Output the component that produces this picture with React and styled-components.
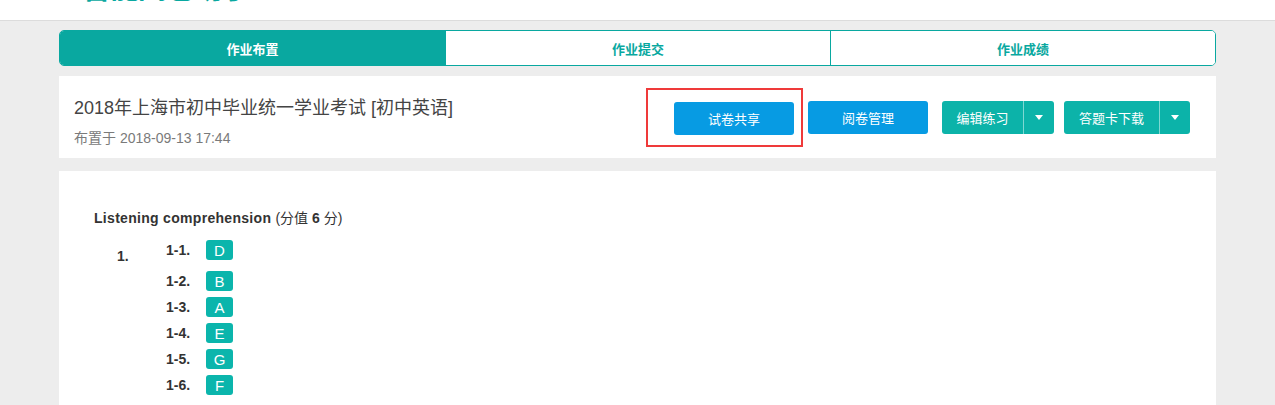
import React from "react";
import styled, { createGlobalStyle } from "styled-components";

const GlobalStyle = createGlobalStyle`
  html, body {
    margin: 0;
    padding: 0;
    background: #ededed;
    font-family: "Liberation Sans", "Noto Sans CJK SC", sans-serif;
    color: #333;
  }
`;

const tabs = ["作业布置", "作业提交", "作业成绩"];

const answers = [
  { no: "1-1.", key: "D" },
  { no: "1-2.", key: "B" },
  { no: "1-3.", key: "A" },
  { no: "1-4.", key: "E" },
  { no: "1-5.", key: "G" },
  { no: "1-6.", key: "F" },
];

function Caret() {
  return (
    <svg width="8" height="5" viewBox="0 0 8 5">
      <path d="M0 0 L8 0 L4 5 Z" fill="#fff" />
    </svg>
  );
}

function App() {
  return (
    <>
      <GlobalStyle />
      <Header>
        <Brand>智能阅卷助手</Brand>
      </Header>
      <Main>
        <Tabs>
          {tabs.map((t, i) => (
            <Tab key={t} active={i === 0}>
              {t}
            </Tab>
          ))}
        </Tabs>

        <InfoCard>
          <TitleBlock>
            <Title>2018年上海市初中毕业统一学业考试 [初中英语]</Title>
            <Meta>布置于 2018-09-13 17:44</Meta>
          </TitleBlock>
          <Actions>
            <Highlight>
              <Button color="blue" width={120}>
                试卷共享
              </Button>
            </Highlight>
            <Button color="blue" width={120} gap={5}>
              阅卷管理
            </Button>
            <Split gap={14}>
              <SplitMain width={81}>编辑练习</SplitMain>
              <SplitToggle>
                <Caret />
              </SplitToggle>
            </Split>
            <Split gap={10}>
              <SplitMain width={95}>答题卡下载</SplitMain>
              <SplitToggle>
                <Caret />
              </SplitToggle>
            </Split>
          </Actions>
        </InfoCard>

        <PaperCard>
          <Section>
            Listening comprehension <Score>(分值 <b>6</b> 分)</Score>
          </Section>
          <Question>
            <QNo>1.</QNo>
            <SubList>
              {answers.map((a, i) => (
                <SubRow key={a.no} first={i === 0}>
                  <SubNo>{a.no}</SubNo>
                  <Badge>{a.key}</Badge>
                </SubRow>
              ))}
            </SubList>
          </Question>
        </PaperCard>
      </Main>
    </>
  );
}

const Header = styled.header`
  height: 20px;
  background: #fff;
  border-bottom: 1px solid #dcdcdc;
  overflow: hidden;
  padding-left: 82px;
`;

const Brand = styled.div`
  margin-top: -27px;
  font-size: 29px;
  line-height: 32px;
  font-weight: bold;
  color: #09a8a0;
  letter-spacing: -1px;
`;

const Main = styled.main`
  width: 1157px;
  margin: 0 auto;
  padding-top: 9px;
`;

const Tabs = styled.div`
  display: grid;
  grid-template-columns: repeat(3, 1fr);
  height: 34px;
  border: 1px solid #09a8a0;
  border-radius: 5px;
  overflow: hidden;
  background: #fff;
`;

const Tab = styled.div`
  display: flex;
  align-items: center;
  justify-content: center;
  font-size: 13px;
  font-weight: bold;
  color: ${(p) => (p.active ? "#fff" : "#09a8a0")};
  background: ${(p) => (p.active ? "#09a8a0" : "#fff")};
  & + & {
    border-left: 1px solid #09a8a0;
  }
`;

const InfoCard = styled.section`
  margin-top: 10px;
  height: 82px;
  background: #fff;
  display: flex;
  align-items: center;
  justify-content: space-between;
  padding: 0 26px 0 15px;
  box-sizing: border-box;
`;

const TitleBlock = styled.div`
  padding-top: 9px;
`;

const Title = styled.h2`
  margin: 0;
  font-size: 18px;
  font-weight: normal;
  line-height: 22px;
  color: #444;
`;

const Meta = styled.div`
  margin-top: 8px;
  font-size: 14px;
  color: #7a7a7a;
`;

const Actions = styled.div`
  display: flex;
  align-items: center;
`;

const Highlight = styled.div`
  border: 2px solid #ef3a3a;
  padding: 12px 7px 10px 26px;
  display: flex;
`;

const Button = styled.button`
  width: ${(p) => p.width}px;
  height: 33px;
  margin-left: ${(p) => p.gap || 0}px;
  border: none;
  border-radius: 3px;
  background: ${(p) => (p.color === "blue" ? "#079be3" : "#0cb3a9")};
  color: #fff;
  font-family: inherit;
  font-size: 13px;
  padding: 0;
`;

const Split = styled.div`
  display: flex;
  height: 33px;
  margin-left: ${(p) => p.gap}px;
  border-radius: 3px;
  overflow: hidden;
  background: #0cb3a9;
`;

const SplitMain = styled.div`
  width: ${(p) => p.width}px;
  display: flex;
  align-items: center;
  justify-content: center;
  color: #fff;
  font-size: 13px;
  border-right: 1px solid #7fd8d2;
`;

const SplitToggle = styled.div`
  width: 30px;
  display: flex;
  align-items: center;
  justify-content: center;
`;

const PaperCard = styled.section`
  margin-top: 13px;
  background: #fff;
  min-height: 260px;
  padding: 36px 35px 20px;
`;

const Section = styled.div`
  font-size: 14px;
  letter-spacing: 0.3px;
  font-weight: bold;
  color: #333;
`;

const Score = styled.span`
  font-weight: normal;
  letter-spacing: 0;
  b {
    font-weight: bold;
  }
`;

const Question = styled.div`
  display: flex;
  margin-top: 13px;
  padding-left: 23px;
`;

const QNo = styled.div`
  width: 49px;
  font-size: 14px;
  font-weight: bold;
  padding-top: 8px;
`;

const SubList = styled.div`
  display: flex;
  flex-direction: column;
`;

const SubRow = styled.div`
  display: flex;
  align-items: center;
  height: 20px;
  margin-bottom: ${(p) => (p.first ? 11 : 6)}px;
`;

const SubNo = styled.div`
  width: 40px;
  font-size: 14px;
  font-weight: bold;
`;

const Badge = styled.span`
  display: inline-flex;
  align-items: center;
  justify-content: center;
  min-width: 27px;
  height: 20px;
  padding: 0 6px;
  box-sizing: border-box;
  border-radius: 3px;
  background: #0bb5ac;
  color: #fff;
  font-size: 15px;
`;

export default App;
